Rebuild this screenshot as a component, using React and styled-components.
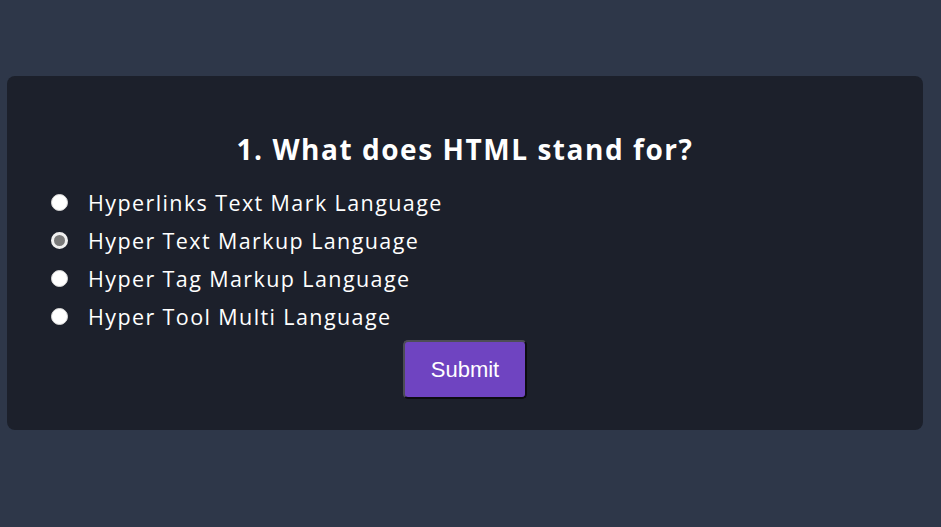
import React, { useState } from "react";
import styled, { createGlobalStyle } from "styled-components";

const Global = createGlobalStyle`
  html, body { margin: 0; padding: 0; }
  body {
    background: #2e3749;
    font-family: "Open Sans", "DejaVu Sans", sans-serif;
    min-height: 527px;
  }
`;

const Page = styled.div`
  padding: 76px 18px 0 7px;
`;

const Card = styled.div`
  background: #1c202b;
  border-radius: 8px;
  padding: 53px 40px 30px 40px;
  display: flex;
  flex-direction: column;
  height: 354px;
  box-sizing: border-box;
`;

const Title = styled.h2`
  margin: 0 0 14px;
  text-align: center;
  color: #ffffff;
  font-family: "Open Sans", sans-serif;
  font-weight: 700;
  font-size: 28px;
  line-height: 40px;
  letter-spacing: 1.55px;
`;

const Options = styled.div`
  display: flex;
  flex-direction: column;
  padding-left: 4px;
`;

const Option = styled.label`
  display: flex;
  align-items: center;
  height: 38px;
  color: #ffffff;
  font-size: 21.5px;
  letter-spacing: 1.4px;
  cursor: pointer;
`;

const Radio = styled.input`
  appearance: none;
  margin: 1px 20px 0 0;
  width: 17px;
  height: 17px;
  border-radius: 50%;
  background: #ffffff;
  border: 1px solid #d8d8d8;
  box-sizing: border-box;
  flex: none;
  &:checked {
    background: #7a7a7a;
    border: 3px solid #f0f0f0;
  }
`;

const Actions = styled.div`
  display: flex;
  justify-content: center;
  margin-top: 5px;
`;

const SubmitButton = styled.button`
  width: 124px;
  height: 59px;
  margin-left: 0;
  background: #6f44c1;
  color: #ffffff;
  font-family: "Liberation Sans", Arial, sans-serif;
  font-size: 22px;
  border: 2px solid;
  border-color: #4d4d55 #0c0c10 #0c0c10 #4d4d55;
  border-radius: 5px;
  cursor: pointer;
`;

const options = [
  "Hyperlinks Text Mark Language",
  "Hyper Text Markup Language",
  "Hyper Tag Markup Language",
  "Hyper Tool Multi Language",
];

export default function App() {
  const [sel, setSel] = useState(1);
  return (
    <Page>
      <Global />
      <Card>
        <Title>1. What does HTML stand for?</Title>
        <Options>
          {options.map((o, i) => (
            <Option key={o}>
              <Radio
                type="radio"
                name="q1"
                checked={sel === i}
                onChange={() => setSel(i)}
              />
              {o}
            </Option>
          ))}
        </Options>
        <Actions>
          <SubmitButton>Submit</SubmitButton>
        </Actions>
      </Card>
    </Page>
  );
}
